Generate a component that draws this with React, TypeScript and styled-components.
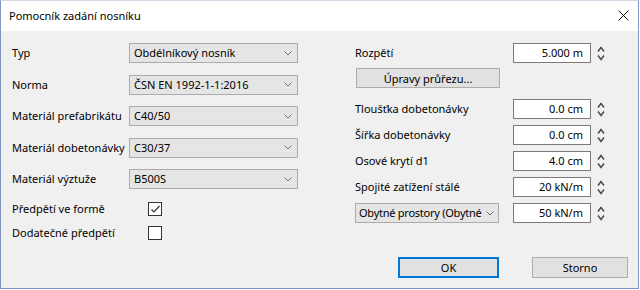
import * as React from "react";
import styled, { createGlobalStyle } from "styled-components";

type TInput = { label: string; value: string };

const leftSelects = [
  { label: "Typ", value: "Obdélníkový nosník" },
  { label: "Norma", value: "ČSN EN 1992-1-1:2016" },
  { label: "Materiál prefabrikátu", value: "C40/50" },
  { label: "Materiál dobetonávky", value: "C30/37" },
  { label: "Materiál výztuže", value: "B500S" },
];

const rightInputs: TInput[] = [
  { label: "Tloušťka dobetonávky", value: "0.0 cm" },
  { label: "Šířka dobetonávky", value: "0.0 cm" },
  { label: "Osové krytí d1", value: "4.0 cm" },
  { label: "Spojité zatížení stálé", value: "20 kN/m" },
];

function Chevron() {
  return (
    <svg width="8" height="5" viewBox="0 0 8 5">
      <polyline
        points="0.5,0.5 4,4 7.5,0.5"
        fill="none"
        stroke="#707070"
        strokeWidth="1"
      />
    </svg>
  );
}

function Spinner() {
  return (
    <SpinBox>
      <svg width="8" height="15" viewBox="0 0 8 15">
        <polyline
          points="1,5.5 4,1.5 7,5.5"
          fill="none"
          stroke="#4a4a4a"
          strokeWidth="1.5"
        />
        <polyline
          points="1,9.5 4,13.5 7,9.5"
          fill="none"
          stroke="#4a4a4a"
          strokeWidth="1.5"
        />
      </svg>
    </SpinBox>
  );
}

function Select({
  value,
  width,
  compact,
}: {
  value: string;
  width?: number;
  compact?: boolean;
}) {
  return (
    <SelectBox $width={width} $compact={compact}>
      <SelectText $compact={compact}>{value}</SelectText>
      <Chevron />
    </SelectBox>
  );
}

function NumberField({ value }: { value: string }) {
  return (
    <FieldCell>
      <NumberInput>{value}</NumberInput>
      <Spinner />
    </FieldCell>
  );
}

function CheckBox({ checked }: { checked: boolean }) {
  return (
    <CheckSquare>
      {checked && (
        <svg width="11" height="11" viewBox="0 0 11 11">
          <polyline
            points="1.5,5.5 4,8 9.5,2"
            fill="none"
            stroke="#333"
            strokeWidth="1.2"
          />
        </svg>
      )}
    </CheckSquare>
  );
}

function App() {
  return (
    <>
      <GlobalStyle />
      <Window>
        <TitleBar>
          <Title>Pomocník zadání nosníku</Title>
          <CloseIcon width="11" height="11" viewBox="0 0 11 11">
            <path d="M0.5 0.5 L10.5 10.5 M10.5 0.5 L0.5 10.5" stroke="#111" strokeWidth="1" />
          </CloseIcon>
        </TitleBar>
        <Body>
          <Content>
            <LeftColumn>
              <SelectGrid>
                {leftSelects.map((row) => (
                  <React.Fragment key={row.label}>
                    <Label>{row.label}</Label>
                    <Select value={row.value} />
                  </React.Fragment>
                ))}
              </SelectGrid>
              <CheckList>
                <CheckRow>
                  <Label>Předpětí ve formě</Label>
                  <CheckBox checked />
                </CheckRow>
                <CheckRow>
                  <Label>Dodatečné předpětí</Label>
                  <CheckBox checked={false} />
                </CheckRow>
              </CheckList>
            </LeftColumn>
            <RightColumn>
              <FieldRow>
                <Label>Rozpětí</Label>
                <NumberField value="5.000 m" />
              </FieldRow>
              <SectionButton>Úpravy průřezu...</SectionButton>
              <FieldList>
                {rightInputs.map((row) => (
                  <FieldRow key={row.label}>
                    <Label>{row.label}</Label>
                    <NumberField value={row.value} />
                  </FieldRow>
                ))}
                <FieldRow>
                  <Select value="Obytné prostory (Obytné" width={144} compact />
                  <NumberField value="50 kN/m" />
                </FieldRow>
              </FieldList>
            </RightColumn>
          </Content>
          <Footer>
            <DialogButton $primary $width={101}>OK</DialogButton>
            <DialogButton $width={96}>Storno</DialogButton>
          </Footer>
        </Body>
      </Window>
    </>
  );
}

const uiFont = `"Segoe UI", "Noto Sans", sans-serif`;

const GlobalStyle = createGlobalStyle`
  html, body {
    margin: 0;
    padding: 0;
    background: #ffffff;
  }
  body {
    font-family: ${uiFont};
    font-size: 11px;
    color: #000;
  }
`;

const Window = styled.div`
  width: 639px;
  height: 289px;
  box-sizing: border-box;
  display: flex;
  flex-direction: column;
  border: 1px solid #8196c2;
  border-top-color: #d3d9e4;
  background: #ffffff;
`;

const TitleBar = styled.div`
  height: 30px;
  flex-shrink: 0;
  display: flex;
  align-items: center;
  justify-content: space-between;
  padding: 0 9px 0 8px;
  background: #ffffff;
`;

const Title = styled.span`
  font-size: 11px;
  color: #000;
  margin-top: -1px;
`;

const CloseIcon = styled.svg`
  display: block;
  margin-top: -1px;
`;

const Body = styled.div`
  flex: 1;
  display: flex;
  flex-direction: column;
  background: #f0f0f0;
`;

const Content = styled.div`
  display: flex;
  padding: 12px 0 0 11px;
`;

const LeftColumn = styled.div`
  display: flex;
  flex-direction: column;
  width: 286px;
`;

const SelectGrid = styled.div`
  display: grid;
  grid-template-columns: 117px 169px;
  grid-auto-rows: 20px;
  row-gap: 11.5px;
  align-items: center;
`;

const CheckList = styled.div`
  display: flex;
  flex-direction: column;
  gap: 10px;
  margin-top: 12px;
`;

const CheckRow = styled.div`
  display: grid;
  grid-template-columns: 136px auto;
  align-items: center;
  height: 14px;
`;

const Label = styled.span`
  white-space: nowrap;
  line-height: 16px;
`;

const SelectBox = styled.div<{ $width?: number; $compact?: boolean }>`
  box-sizing: border-box;
  width: ${(p) => (p.$width ? `${p.$width}px` : "100%")};
  height: 20px;
  display: flex;
  align-items: center;
  justify-content: space-between;
  padding: ${(p) => (p.$compact ? "0 4px 0 3px" : "0 5px 0 4px")};
  gap: ${(p) => (p.$compact ? "2px" : "4px")};
  background: #e5e5e5;
  border: 1px solid #acacac;
  svg {
    flex-shrink: 0;
  }
`;

const SelectText = styled.span<{ $compact?: boolean }>`
  overflow: hidden;
  white-space: nowrap;
  line-height: 16px;
  letter-spacing: ${(p) => (p.$compact ? "-0.25px" : "normal")};
`;

const RightColumn = styled.div`
  display: flex;
  flex-direction: column;
  margin-left: 57px;
  width: 250px;
`;

const FieldList = styled.div`
  display: flex;
  flex-direction: column;
  gap: 6px;
  margin-top: 11px;
`;

const FieldRow = styled.div`
  display: flex;
  align-items: center;
  justify-content: space-between;
  height: 20px;
`;

const FieldCell = styled.div`
  display: flex;
  align-items: center;
  gap: 6px;
`;

const NumberInput = styled.div`
  box-sizing: border-box;
  width: 78px;
  height: 20px;
  padding: 0 7px 0 4px;
  background: #ffffff;
  border: 1px solid #7a7a7a;
  text-align: right;
  line-height: 18px;
  white-space: nowrap;
`;

const SpinBox = styled.div`
  width: 8px;
  display: flex;
  svg {
    display: block;
  }
`;

const SectionButton = styled.button`
  box-sizing: border-box;
  width: 144px;
  height: 20px;
  margin: 5px 0 0 1px;
  padding: 0;
  font: inherit;
  color: #000;
  background: #e1e1e1;
  border: 1px solid #adadad;
`;

const CheckSquare = styled.div`
  box-sizing: border-box;
  width: 14px;
  height: 14px;
  display: flex;
  align-items: center;
  justify-content: center;
  background: #ffffff;
  border: 1px solid #333333;
`;

const Footer = styled.div`
  margin-top: auto;
  display: flex;
  justify-content: flex-end;
  gap: 33px;
  padding: 0 10px 10px 0;
`;

const DialogButton = styled.button<{ $primary?: boolean; $width: number }>`
  box-sizing: border-box;
  width: ${(p) => p.$width}px;
  height: 21px;
  padding: 0;
  font: inherit;
  color: #000;
  background: #e1e1e1;
  border: ${(p) => (p.$primary ? "2px solid #0078d7" : "1px solid #adadad")};
`;

export default App;
